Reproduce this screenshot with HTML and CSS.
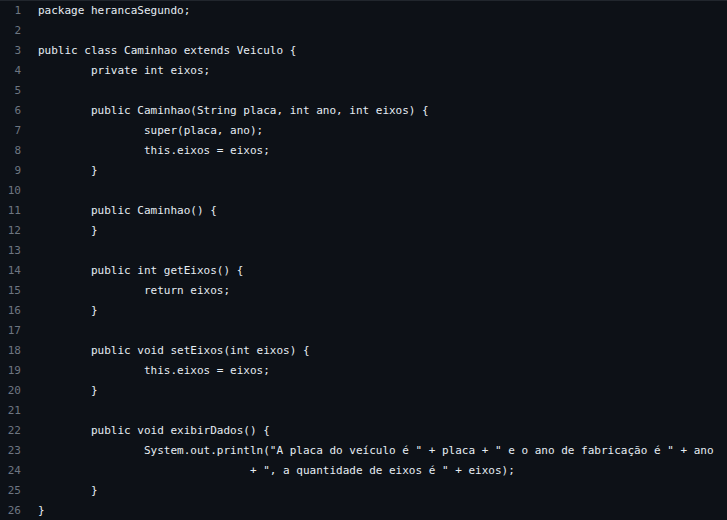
FILE: index.html
```html
<!DOCTYPE html>
<html>
<head>
<meta charset="utf-8">
<link rel="stylesheet" href="styles.css">
</head>
<body>
<div class="code">
<div class="line"><span class="num">1</span><span class="src">package herancaSegundo;</span></div>
<div class="line"><span class="num">2</span><span class="src"></span></div>
<div class="line"><span class="num">3</span><span class="src">public class Caminhao extends Veiculo {</span></div>
<div class="line"><span class="num">4</span><span class="src">	private int eixos;</span></div>
<div class="line"><span class="num">5</span><span class="src">	</span></div>
<div class="line"><span class="num">6</span><span class="src">	public Caminhao(String placa, int ano, int eixos) {</span></div>
<div class="line"><span class="num">7</span><span class="src">		super(placa, ano);</span></div>
<div class="line"><span class="num">8</span><span class="src">		this.eixos = eixos;</span></div>
<div class="line"><span class="num">9</span><span class="src">	}</span></div>
<div class="line"><span class="num">10</span><span class="src">	</span></div>
<div class="line"><span class="num">11</span><span class="src">	public Caminhao() {</span></div>
<div class="line"><span class="num">12</span><span class="src">	}</span></div>
<div class="line"><span class="num">13</span><span class="src"></span></div>
<div class="line"><span class="num">14</span><span class="src">	public int getEixos() {</span></div>
<div class="line"><span class="num">15</span><span class="src">		return eixos;</span></div>
<div class="line"><span class="num">16</span><span class="src">	}</span></div>
<div class="line"><span class="num">17</span><span class="src"></span></div>
<div class="line"><span class="num">18</span><span class="src">	public void setEixos(int eixos) {</span></div>
<div class="line"><span class="num">19</span><span class="src">		this.eixos = eixos;</span></div>
<div class="line"><span class="num">20</span><span class="src">	}</span></div>
<div class="line"><span class="num">21</span><span class="src">	</span></div>
<div class="line"><span class="num">22</span><span class="src">	public void exibirDados() {</span></div>
<div class="line"><span class="num">23</span><span class="src">		System.out.println("A placa do veículo é " + placa + " e o ano de fabricação é " + ano</span></div>
<div class="line"><span class="num">24</span><span class="src">				+ ", a quantidade de eixos é " + eixos);</span></div>
<div class="line"><span class="num">25</span><span class="src">	}</span></div>
<div class="line"><span class="num">26</span><span class="src">}</span></div>
</div>
</body>
</html>
```
FILE: styles.css
```css
html, body {
  margin: 0;
  padding: 0;
  background: #0d1117;
}
.code {
  border-top: 1px solid #21262d;
  font-family: "DejaVu Sans Mono", "Liberation Mono", monospace;
  font-size: 11px;
  color: #e6edf3;
}
.line {
  display: flex;
  height: 20px;
  line-height: 20px;
}
.num {
  width: 21px;
  flex: none;
  text-align: right;
  color: #6e7681;
}
.src {
  padding-left: 17px;
  white-space: pre;
  tab-size: 8;
}
```
